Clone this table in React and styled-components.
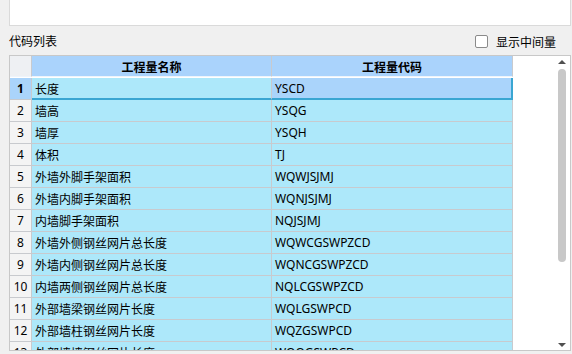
import React from "react";
import styled, { createGlobalStyle } from "styled-components";

const Global = createGlobalStyle`
  html, body { margin: 0; padding: 0; background: #f0f0f0; }
  body { font-family: "Noto Sans", "Noto Sans CJK SC", sans-serif; font-size: 12px; color: #000; }
`;

const Page = styled.div`
  width: 572px;
  height: 354px;
  overflow: hidden;
  padding: 0 1px 0 9px;
  box-sizing: border-box;
  display: flex;
  flex-direction: column;
`;

const TopBox = styled.div`
  height: 26px;
  box-sizing: border-box;
  background: #fff;
  border: 1px solid #dadada;
  border-top: none;
`;

const Toolbar = styled.div`
  height: 29px;
  display: flex;
  align-items: center;
  justify-content: space-between;
  padding-right: 15px;
  padding-top: 1px;
  box-sizing: border-box;
`;

const Label = styled.span`
  font-family: "Noto Sans CJK SC", sans-serif;
  font-size: 12px;
  line-height: 14px;
`;

const CheckWrap = styled.label`
  display: flex;
  align-items: center;
  gap: 8px;
  font-family: "Noto Sans CJK SC", sans-serif;
  font-size: 12px;
`;

const Box = styled.span`
  width: 13px;
  height: 13px;
  box-sizing: border-box;
  border: 1px solid #8a8a8a;
  border-radius: 2px;
  background: #fff;
`;

const Frame = styled.div`
  height: 296px;
  box-sizing: border-box;
  border: 1px solid #c8c8c8;
  background: #fff;
  display: flex;
  overflow: hidden;
`;

const Grid = styled.div`
  flex: 1;
  display: grid;
  grid-template-columns: 22px 240px 241px;
  grid-auto-rows: 22px;
  align-content: start;
  overflow: hidden;
`;

const Cell = styled.div`
  box-sizing: border-box;
  border-right: 1px solid #c8cace;
  border-bottom: 1px solid #c8cace;
  background: #ade8fa;
  padding-left: 3px;
  display: flex;
  align-items: center;
  white-space: nowrap;
  overflow: hidden;
  font-family: "Noto Sans", "Noto Sans CJK SC", sans-serif;
  font-size: 12px;
  ${(p) =>
    p.$sel &&
    `border-bottom: 2px solid #3aa6d2; padding-top: 1px;`}
  ${(p) =>
    p.$cur &&
    `background: #aad4fb; border-right: 2px solid #3aa6d2;`}
`;

const HeadCell = styled.div`
  box-sizing: border-box;
  height: 21px;
  border-right: 1px solid #c8cace;
  border-bottom: 1px solid #eef4fb;
  background: ${(p) => (p.$corner ? "#eef0f3" : "#aad3fc")};
  display: flex;
  align-items: center;
  justify-content: center;
  font-family: "Noto Sans CJK SC", sans-serif;
  font-weight: bold;
  font-size: 12px;
`;

const NumCell = styled.div`
  box-sizing: border-box;
  border-right: 1px solid #c8cace;
  border-bottom: 1px solid #c8cace;
  background: ${(p) => (p.$sel ? "#aad4fb" : "#f4f4f4")};
  display: flex;
  align-items: center;
  justify-content: center;
  font-family: "Noto Sans", sans-serif;
  font-size: 12px;
  font-weight: ${(p) => (p.$sel ? "bold" : "normal")};
`;

const Scroll = styled.div`
  width: 17px;
  margin-left: 40px;
  display: flex;
  flex-direction: column;
  align-items: center;
  padding: 4px 0 3px;
  box-sizing: border-box;
`;

const Arrow = styled.div`
  width: 0;
  height: 0;
  border-left: 4px solid transparent;
  border-right: 4px solid transparent;
  ${(p) =>
    p.$down
      ? "border-top: 4px solid #505050;"
      : "border-bottom: 4px solid #505050;"}
`;

const Track = styled.div`
  flex: 1;
  width: 8px;
  padding-top: 5px;
  display: flex;
  flex-direction: column;
`;

const Thumb = styled.div`
  height: 193px;
  background: #c8c8c8;
  border-radius: 4px;
`;

const rows = [
  ["长度", "YSCD"],
  ["墙高", "YSQG"],
  ["墙厚", "YSQH"],
  ["体积", "TJ"],
  ["外墙外脚手架面积", "WQWJSJMJ"],
  ["外墙内脚手架面积", "WQNJSJMJ"],
  ["内墙脚手架面积", "NQJSJMJ"],
  ["外墙外侧钢丝网片总长度", "WQWCGSWPZCD"],
  ["外墙内侧钢丝网片总长度", "WQNCGSWPZCD"],
  ["内墙两侧钢丝网片总长度", "NQLCGSWPZCD"],
  ["外部墙梁钢丝网片长度", "WQLGSWPCD"],
  ["外部墙柱钢丝网片长度", "WQZGSWPCD"],
  ["外部墙墙钢丝网片长度", "WQQGSWPCD"],
];

export default function App() {
  return (
    <>
      <Global />
      <Page>
        <TopBox />
        <Toolbar>
          <Label>代码列表</Label>
          <CheckWrap>
            <Box />
            <span>显示中间量</span>
          </CheckWrap>
        </Toolbar>
        <Frame>
          <Grid>
            <HeadCell $corner />
            <HeadCell>工程量名称</HeadCell>
            <HeadCell>工程量代码</HeadCell>
            {rows.map(([name, code], i) => (
              <React.Fragment key={code}>
                <NumCell $sel={i === 0}>{i + 1}</NumCell>
                <Cell $sel={i === 0}>{name}</Cell>
                <Cell $sel={i === 0} $cur={i === 0}>{code}</Cell>
              </React.Fragment>
            ))}
          </Grid>
          <Scroll>
            <Arrow />
            <Track>
              <Thumb />
            </Track>
            <Arrow $down />
          </Scroll>
        </Frame>
      </Page>
    </>
  );
}
